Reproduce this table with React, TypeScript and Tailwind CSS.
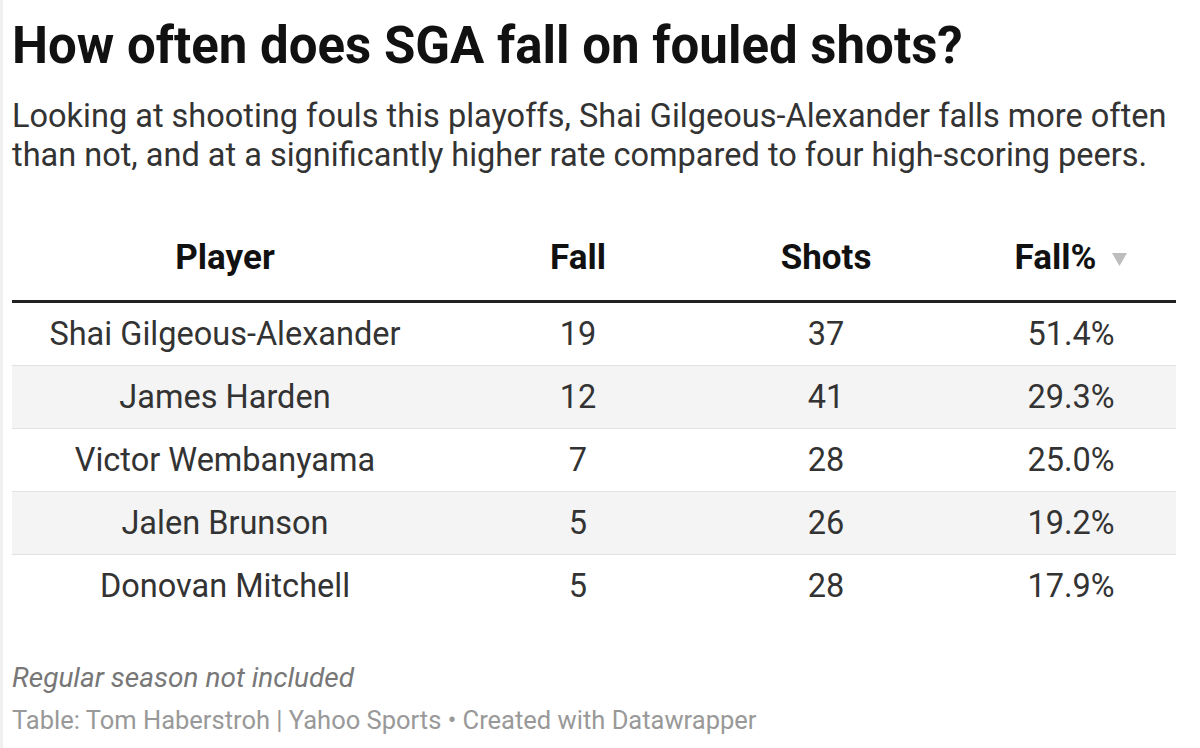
import React from "react";

const rows = [
  { name: "Shai Gilgeous-Alexander", fall: "19", shots: "37", pct: "51.4%" },
  { name: "James Harden", fall: "12", shots: "41", pct: "29.3%" },
  { name: "Victor Wembanyama", fall: "7", shots: "28", pct: "25.0%" },
  { name: "Jalen Brunson", fall: "5", shots: "26", pct: "19.2%" },
  { name: "Donovan Mitchell", fall: "5", shots: "28", pct: "17.9%" },
];

export default function App() {
  return (
    <div
      className="w-[1200px] h-[748px] bg-white border-l-[3px] border-[#f0f0f0] overflow-hidden"
      style={{ fontFamily: "Roboto, 'Liberation Sans', sans-serif" }}
    >
      <div className="pl-[9px] pr-[18px] pt-[16px]">
        <h1 className="text-[51px] leading-[60px] font-bold text-[#111] whitespace-nowrap">
          How often does SGA fall on fouled shots?
        </h1>
        <p className="mt-[21px] text-[32.5px] leading-[39px] text-[#333]">
          Looking at shooting fouls this playoffs, Shai Gilgeous-Alexander falls more often
          than not, and at a significantly higher rate compared to four high-scoring peers.
        </p>
        <div className="mt-[45px] mr-[6px]">
          <div className="grid grid-cols-[426px_280px_216px_1fr] items-center h-[83px] pb-[3px] border-b-[3px] border-[#222] text-[35px] font-bold text-[#111]">
            <div className="text-center">Player</div>
            <div className="text-center">Fall</div>
            <div className="text-center">Shots</div>
            <div className="flex items-center justify-center pl-[32px] gap-[16px]">
              <span>Fall%</span>
              <svg width="15" height="13" viewBox="0 0 15 13" className="mt-[2px]">
                <polygon points="0,0 15,0 7.5,13" fill="#bdbdbd" />
              </svg>
            </div>
          </div>
          {rows.map((r, i) => (
            <div
              key={r.name}
              className={`grid grid-cols-[426px_280px_216px_1fr] items-center h-[63px] text-[32.5px] text-[#333] ${
                i % 2 === 1 ? "bg-[#f4f4f4]" : "bg-white"
              } ${i < rows.length - 1 ? "border-b border-[#e2e2e2]" : ""}`}
            >
              <div className="text-center">{r.name}</div>
              <div className="text-center">{r.fall}</div>
              <div className="text-center">{r.shots}</div>
              <div className="text-center pl-[32px]">{r.pct}</div>
            </div>
          ))}
        </div>
        <div className="mt-[42px] text-[28px] leading-[36px] italic text-[#777]">
          Regular season not included
        </div>
        <div className="mt-[9px] text-[25.5px] leading-[30px] text-[#999] whitespace-nowrap">
          Table: Tom Haberstroh | Yahoo Sports • Created with Datawrapper
        </div>
      </div>
    </div>
  );
}
